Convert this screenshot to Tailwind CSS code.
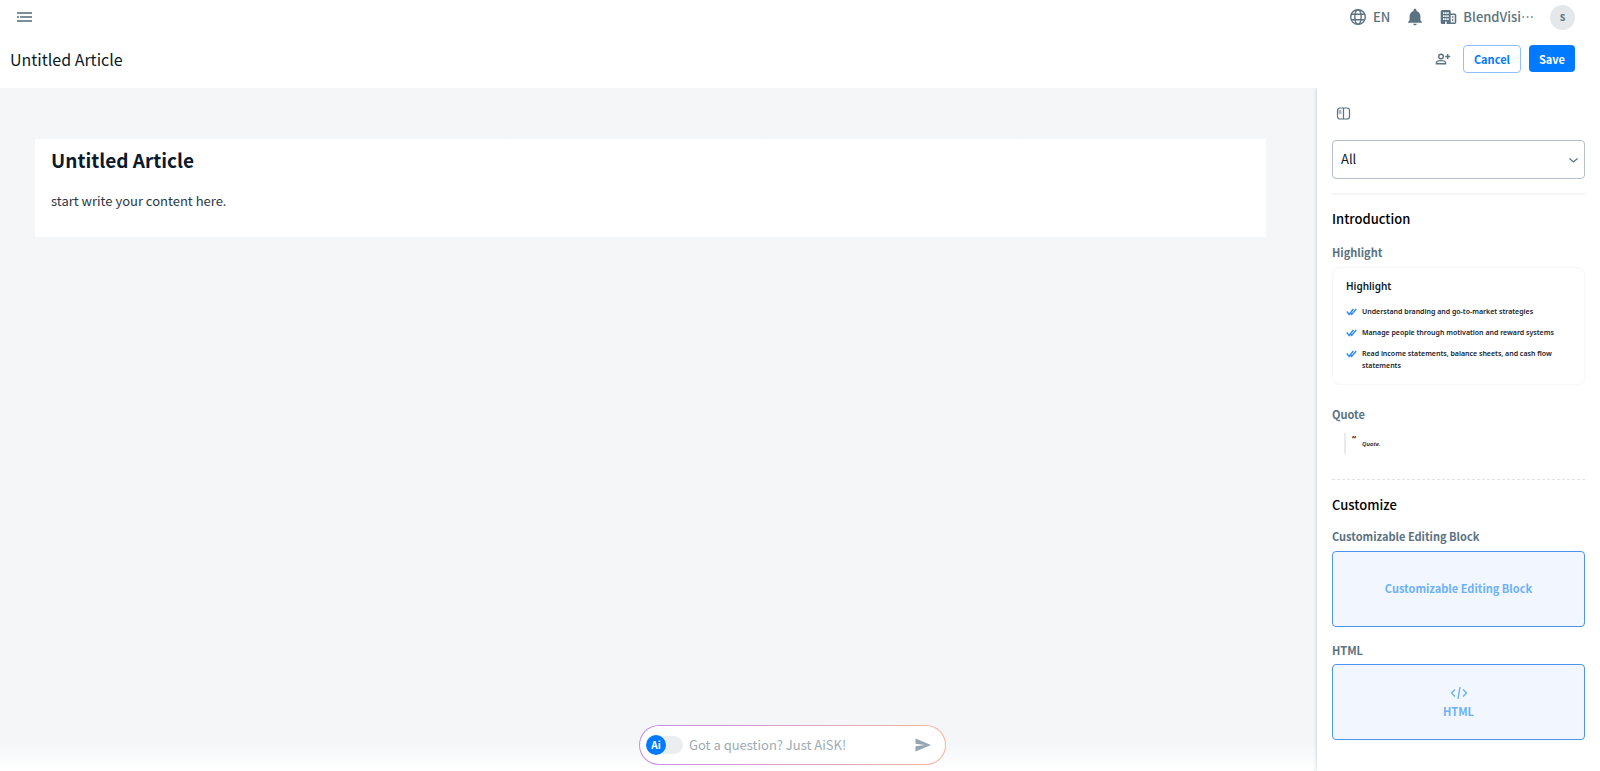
<!DOCTYPE html>
<html lang="en">
<head>
  <meta charset="UTF-8">
  <meta name="viewport" content="width=device-width, initial-scale=1.0">
  <title>Untitled Article</title>
  <script src="https://cdn.jsdelivr.net/npm/@tailwindcss/browser@4"></script>
</head>
<body class="min-h-screen flex flex-col bg-white text-[#0b1a2b] font-['Noto_Sans_CJK_TC','Noto_Sans',sans-serif]">

  <!-- Top Bar -->
  <header class="h-[34px] pl-4 pr-[25px] flex items-center justify-between text-[#5b7282]">
    <button type="button" aria-label="Open menu">
      <svg class="w-[17px] h-3" viewBox="0 0 17 12" fill="#7d8f9b">
        <path d="M1 1h15v2H1zM1 5h2v2H1zM4 5h12v2H4zM1 9h15v2H1z"></path>
      </svg>
    </button>
    <div class="flex items-center text-[13px] font-medium leading-5">
      <button type="button" class="flex items-center gap-1.5">
        <svg class="size-[18px]" viewBox="0 0 18 18" fill="none" stroke="currentColor" stroke-width="1.4">
          <circle cx="9" cy="9" r="7.3"></circle>
          <ellipse cx="9" cy="9" rx="3.2" ry="7.3"></ellipse>
          <path d="M2.3 6.3h13.4M2.3 11.7h13.4"></path>
        </svg>
        EN
      </button>
      <button type="button" class="ml-[15px]" aria-label="Notifications">
        <svg class="size-5" viewBox="0 0 24 24" fill="currentColor">
          <path d="M12 22c1.1 0 2-.9 2-2h-4c0 1.1.9 2 2 2zm6.500-6v-5c0-3.100-1.800-5.600-4.700-6.300V4c0-1-.8-1.800-1.800-1.800s-1.800.8-1.800 1.800v.7C7.300 5.400 5.500 7.900 5.500 11v5l-1.800 2v1h16.600v-1z"></path>
        </svg>
      </button>
      <button type="button" class="ml-[15px] flex items-center gap-1.5">
        <svg class="w-[17px] h-4" viewBox="0 0 17 16">
          <path fill="currentColor" fill-rule="evenodd" d="M2.2 1h7q1.500 0 1.500 1.500V4.500h3.900q1.700 0 1.700 1.700v7.100q0 1.700-1.700 1.700H2.200Q.7 15 .7 13.500v-11Q.7 1 2.200 1zM10.700 6v7.500h4V6zM3 3.300v1.700h1.500V3.300zM5.100 3.300v1.700h1.500V3.300zM7.200 3.300v1.700h1.500V3.300zM3 6.300v1.700h1.500V6.300zM5.100 6.300v1.700h1.500V6.300zM7.200 6.300v1.700h1.500V6.300zM3 9.300v1.700h1.500V9.300zM5.100 9.300v1.700h1.500V9.300zM7.200 9.300v1.700h1.500V9.300zM5.100 12.500V15h1.500v-2.500z"></path>
          <path fill="currentColor" d="M11.900 7.300h1.500v1.500h-1.500zM11.900 10.300h1.500v1.500h-1.500z"></path>
        </svg>
        <span lang="zh-Hant">BlendVisi…</span>
      </button>
      <button type="button" class="ml-4 size-[25px] rounded-full bg-[#e4e8eb] text-[9px] leading-none font-bold" aria-label="Account">S</button>
    </div>
  </header>

  <!-- Title Row -->
  <div class="h-[54px] pl-2.5 pr-[25px] pb-[5px] flex items-center justify-between">
    <h1 class="text-base leading-6">Untitled Article</h1>
    <div class="flex items-center gap-2 text-[11px] font-bold leading-5">
      <button type="button" class="mr-1 text-[#5b7282]" aria-label="Add collaborator">
        <svg class="w-4 h-3.5" viewBox="0 0 16 14" fill="none" stroke="currentColor" stroke-width="1.4">
          <circle cx="6" cy="4.5" r="2.3"></circle>
          <path d="M1.500 11.800v-1.200c0-1.300 2.600-2 4.500-2s4.500.7 4.500 2v1.200zM12.700 2v5M10.200 4.500h5"></path>
        </svg>
      </button>
      <button type="button" class="h-7 px-2.5 rounded border border-[#8fc0ff] text-[#007aff]">Cancel</button>
      <button type="button" class="h-[27px] px-2.5 rounded bg-[#007aff] text-white">Save</button>
    </div>
  </div>

  <div class="flex-1 flex">
    <!-- Editor -->
    <main class="flex-1 bg-linear-to-t from-white to-[#f4f6f8] to-[28px] pl-[35px] pr-[51px] pt-[51px]">
      <article class="h-[98px] px-4 pt-[7px] bg-white">
        <h2 class="text-[19px] font-bold leading-7">Untitled Article</h2>
        <p class="mt-[15px] text-[13px] leading-6 text-[#2b3844]">start write your content here.</p>
      </article>
    </main>

    <!-- Blocks Panel -->
    <aside class="w-[283px] px-[15px] pt-[18px] bg-white shadow-[-1px_0_3px_rgba(90,110,130,0.2)] [clip-path:inset(0_0_0_-6px)]">
      <button type="button" class="ml-1 block text-[#5b7282]" aria-label="Toggle panel">
        <svg class="size-[15px]" viewBox="0 0 15 15" fill="none" stroke="currentColor" stroke-width="1.2">
          <rect x="1.5" y="2" width="12" height="11" rx="2.5"></rect>
          <path d="M7.500 2v11M2.500 5h3M2.500 7h3"></path>
        </svg>
      </button>

      <div class="relative mt-[19px]">
        <select aria-label="Block category" class="w-full h-[39px] px-2 pb-0.5 appearance-none rounded border border-[#b4bfc8] bg-white text-[13px]">
          <option>All</option>
          <option>Introduction</option>
          <option>Customize</option>
        </select>
        <svg class="absolute right-1.5 top-[17px] w-[11px] h-[7px] pointer-events-none" viewBox="0 0 11 7" fill="none" stroke="#5b7282" stroke-width="1.2">
          <path d="M1.500 1.500l4 3.500 4-3.500"></path>
        </svg>
      </div>

      <section class="mt-3.5 pt-3.5 border-t-2 border-[#f2f4f5]">
        <h3 class="text-[13px] font-medium leading-5 text-black">Introduction</h3>
        <h4 class="mt-[13px] text-[11px] font-bold leading-5 text-[#5b7282]">Highlight</h4>
        <div class="mt-[5px] h-[118px] px-[13px] pt-2.5 rounded-lg border border-[#f6f7f8] font-['Noto_Sans',sans-serif]">
          <h5 class="text-[10px] font-semibold leading-4">Highlight</h5>
          <ul class="mt-3 space-y-[9px] text-[7px] font-semibold leading-3 text-[#16222d]">
            <li class="flex gap-[5px]">
              <svg class="mt-0.5 w-[11px] h-2 shrink-0" viewBox="0 0 11 8" fill="none" stroke="#2f8cf5" stroke-width="1.4">
                <path d="M.8 3.500l2.400 3L7.300 1M4 4.500l1.700 2L10.200 1"></path>
              </svg>
              Understand branding and go-to-market strategies
            </li>
            <li class="flex gap-[5px]">
              <svg class="mt-0.5 w-[11px] h-2 shrink-0" viewBox="0 0 11 8" fill="none" stroke="#2f8cf5" stroke-width="1.4">
                <path d="M.8 3.500l2.400 3L7.300 1M4 4.500l1.700 2L10.200 1"></path>
              </svg>
              Manage people through motivation and reward systems
            </li>
            <li class="flex gap-[5px]">
              <svg class="mt-0.5 w-[11px] h-2 shrink-0" viewBox="0 0 11 8" fill="none" stroke="#2f8cf5" stroke-width="1.4">
                <path d="M.8 3.500l2.400 3L7.300 1M4 4.500l1.700 2L10.200 1"></path>
              </svg>
              Read income statements, balance sheets, and cash flow statements
            </li>
          </ul>
        </div>

        <h4 class="mt-[19px] text-[11px] font-bold leading-5 text-[#5b7282]">Quote</h4>
        <blockquote class="mt-[9px] ml-3 h-[21px] pl-1.5 flex gap-1.5 border-l-2 border-[#e8eaec] font-['Noto_Sans',sans-serif]">
          <span class="text-[9px] leading-3 font-bold">“</span>
          <p class="text-[6px] leading-[22px] italic font-semibold">Quote.</p>
        </blockquote>
      </section>

      <section class="mt-[25px] pt-[15px] border-t border-dashed border-[#dfe3e6]">
        <h3 class="text-[13px] font-medium leading-5 text-black">Customize</h3>
        <h4 class="mt-[11px] text-[11px] font-bold leading-5 text-[#5b7282]">Customizable Editing Block</h4>
        <button type="button" class="mt-[5px] w-full h-[76px] pb-0.5 rounded border border-[#4c94f0] bg-[#f2f7ff] text-[11px] font-bold text-[#6bb1fa]">Customizable Editing Block</button>
        <h4 class="mt-[13px] text-[11px] font-bold leading-5 text-[#5b7282]">HTML</h4>
        <button type="button" class="mt-1 w-full h-[76px] pt-0.5 flex flex-col items-center justify-center rounded border border-[#4c94f0] bg-[#f2f7ff] text-[11px] font-bold leading-5 text-[#6bb1fa]">
          <svg class="w-[18px] h-4" viewBox="0 0 18 16" fill="none" stroke="currentColor" stroke-width="1.4">
            <path d="M5 4.500L1.500 8 5 11.500M13 4.500L16.500 8 13 11.500M10 2L8 14"></path>
          </svg>
          HTML
        </button>
      </section>
    </aside>
  </div>

  <!-- Ask Bar -->
  <form class="fixed bottom-[6px] left-1/2 -ml-[161px] w-[307px] rounded-full p-px bg-linear-to-r from-[#c58bea] to-[#f8b49a]">
    <div class="h-[38px] pl-1.5 pr-3.5 flex items-center rounded-full bg-white">
      <label class="relative w-[37px] h-5 flex items-center">
        <input type="checkbox" role="switch" aria-label="Ai" class="ml-2 w-[29px] h-[18px] appearance-none rounded-full bg-[#ebedef]">
        <span class="absolute left-0 top-0 size-5 rounded-full bg-[#007aff] text-center text-[10px] leading-5 font-bold text-white">Ai</span>
      </label>
      <input type="text" aria-label="Question" placeholder="Got a question? Just AiSK!" class="ml-1.5 min-w-0 flex-1 text-[13px] placeholder:text-[#9dabb5] focus:outline-none">
      <button type="submit" aria-label="Send">
        <svg class="w-4 h-3.5" viewBox="0 0 16 14" fill="#97a5b0">
          <path d="M.5.5L16 7 .5 13.500V8.300L10 7 .5 5.700z"></path>
        </svg>
      </button>
    </div>
  </form>

</body>
</html>
